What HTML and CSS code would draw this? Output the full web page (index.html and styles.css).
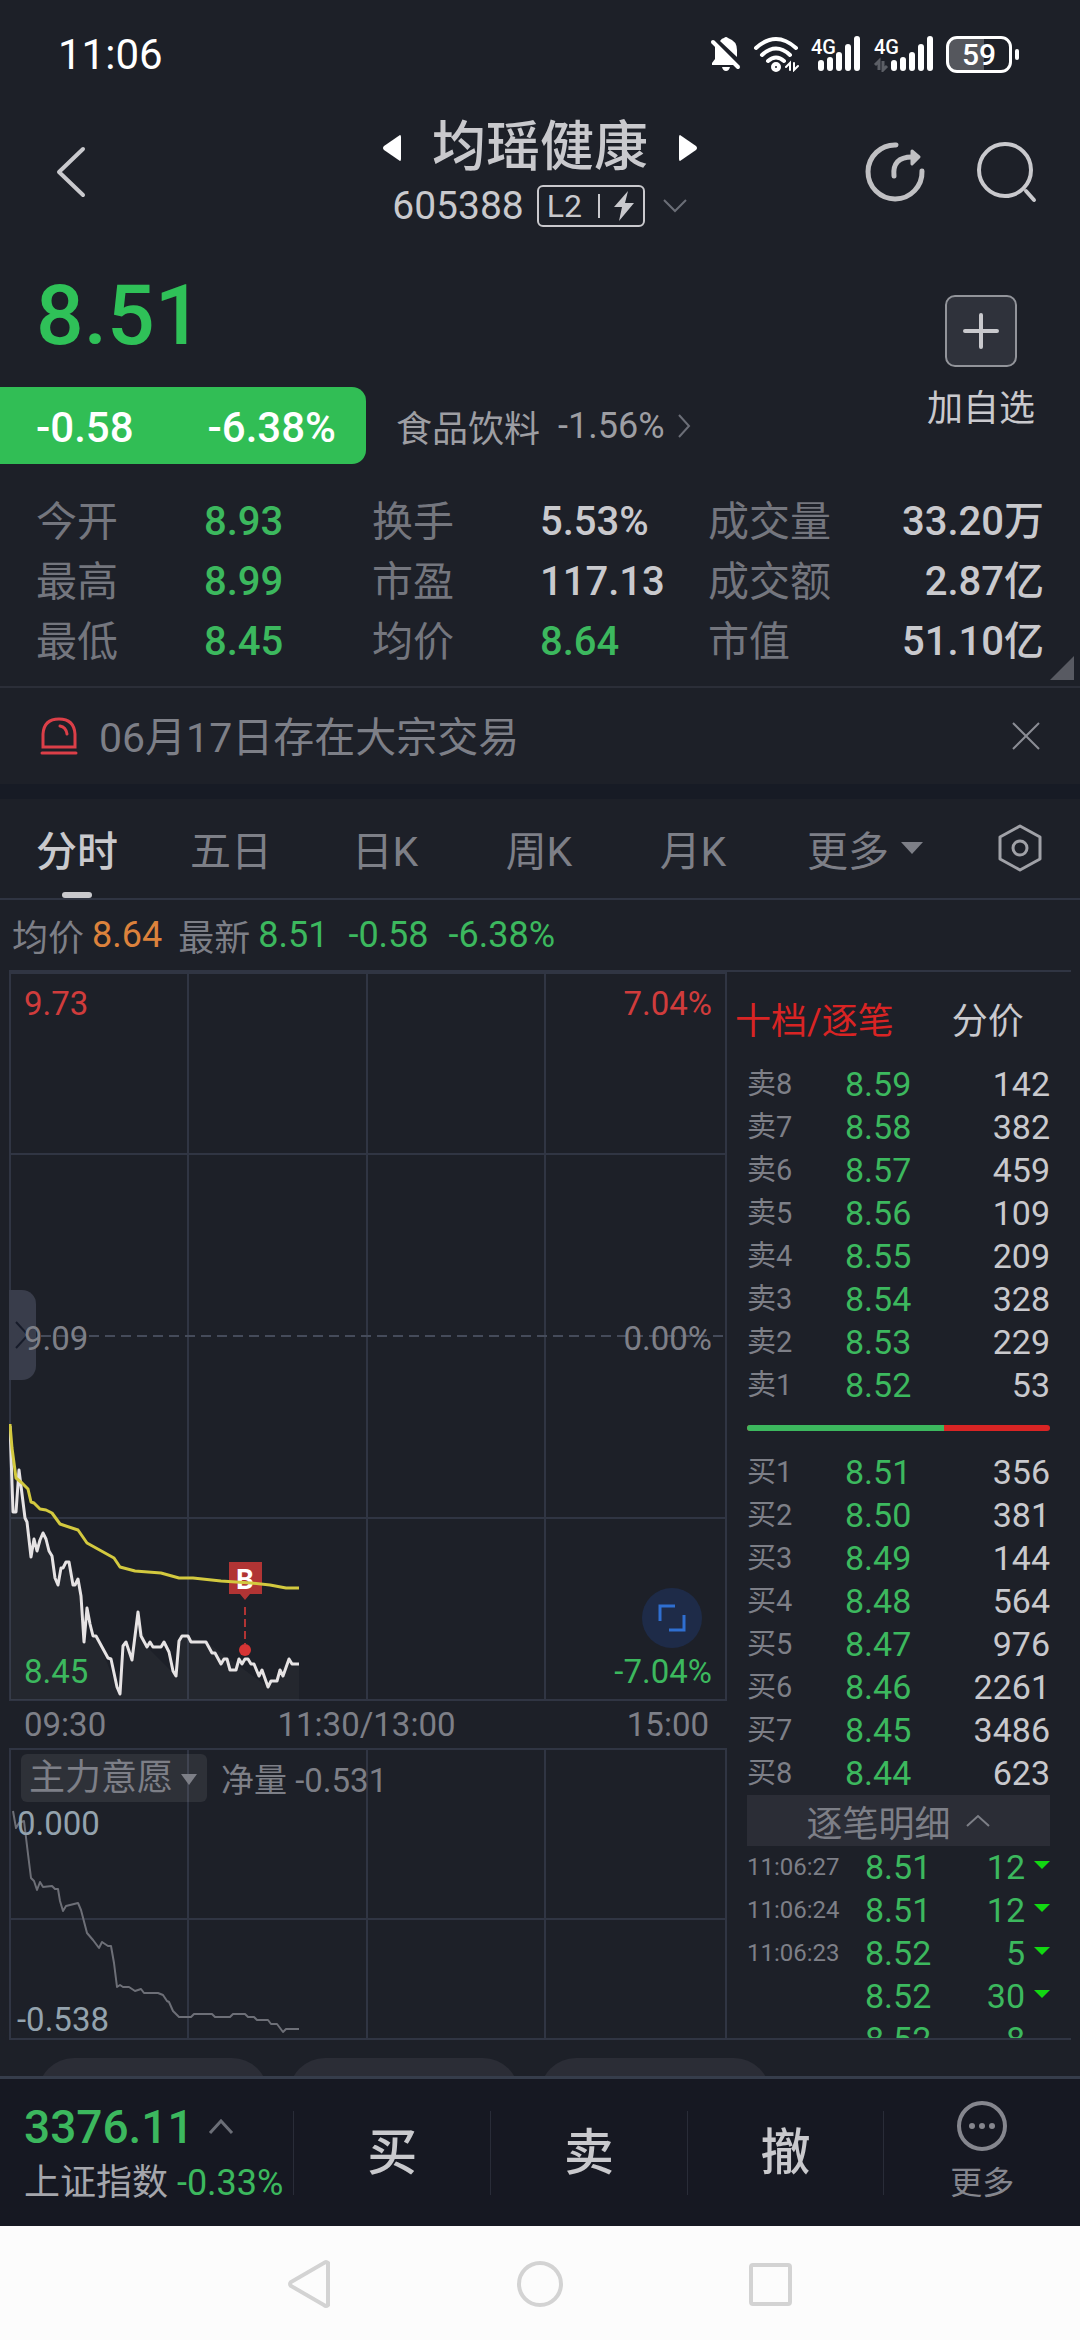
FILE: index.html
```html
<!DOCTYPE html>
<html lang="zh-CN">
<head>
    <meta charset="UTF-8">
    <meta name="viewport" content="width=device-width, initial-scale=1.0">
    <title>均瑶健康 605388</title>
    <link rel="stylesheet" href="styles.css">
</head>
<body>
    <div class="app">
        <div class="status-bar">
            <span class="clock">11:06</span>
            <div class="status-icons">
                <svg width="32" height="36" viewBox="0 0 32 36" fill="#fff">
                    <path d="M5 10L25 29H2V27L5 23Z"/>
                    <path d="M10 5Q12 2 14 2Q16 0 18 2Q27 5 27 14V21Z"/>
                    <path d="M12 31H20Q19 35 16 35Q13 35 12 31Z"/>
                    <path d="M3 6L28 31" stroke="#fff" stroke-width="4" stroke-linecap="round"/>
                </svg>
                <svg width="46" height="36" viewBox="0 0 46 36" fill="none" stroke="#fff" stroke-width="4" stroke-linecap="round">
                    <path d="M3 12Q23 -6 43 12M9 19Q23 6 37 19M15 25Q23 18 31 25"/>
                    <circle cx="23" cy="31" r="3"/>
                    <path d="M37 34V27L33 31M41 27V34L45 30" stroke-width="2"/>
                </svg>
                <svg width="52" height="36" viewBox="0 0 52 36">
                    <text class="net" x="1" y="18">4G</text>
                    <path d="M11 27V32M20 24V32M29 19V32M38 11V32M47 3V32" stroke="#fff" stroke-width="6" stroke-linecap="round"/>
                </svg>
                <svg width="62" height="36" viewBox="0 0 62 36">
                    <text class="net" x="1" y="18">4G</text>
                    <path d="M6 34V25L2 29M10 25V34L14 30" fill="none" stroke="#5c5f66" stroke-width="3"/>
                    <path d="M21 27V32M30 24V32M39 19V32M48 11V32M57 3V32" stroke="#fff" stroke-width="6" stroke-linecap="round"/>
                </svg>
                <span class="battery">59</span>
            </div>
        </div>

        <header class="header">
            <button class="icon-btn back" aria-label="返回">
                <svg width="30" height="52" viewBox="0 0 30 52" fill="none" stroke="#c9c9cd" stroke-width="4" stroke-linecap="round" stroke-linejoin="round"><path d="M27 3L3 26L27 49"/></svg>
            </button>
            <div class="stock">
                <div class="stock-name">
                    <button aria-label="上一只"><svg width="20" height="28" viewBox="0 0 20 28" fill="#fff"><path d="M18 1Q19 1 19 3V25Q19 27 18 27L2 16Q0 14 2 12Z"/></svg></button>
                    <h1>均瑶健康</h1>
                    <button aria-label="下一只"><svg width="20" height="28" viewBox="0 0 20 28" fill="#fff"><path d="M2 1Q1 1 1 3V25Q1 27 2 27L18 16Q20 14 18 12Z"/></svg></button>
                </div>
                <div class="stock-code">
                    <span>605388</span>
                    <span class="level">L2<i></i>
                        <svg width="22" height="30" viewBox="0 0 22 30" fill="#c9c9cd"><path d="M15 0L1 16H9L6 30L21 12H12Z"/></svg>
                    </span>
                    <svg width="26" height="16" viewBox="0 0 26 16" fill="none" stroke="#6b6e77" stroke-width="2"><path d="M2 2L13 13L24 2"/></svg>
                </div>
            </div>
            <div class="header-actions">
                <button class="icon-btn" aria-label="分享">
                    <svg width="62" height="62" viewBox="0 0 62 62" fill="none" stroke="#c0c0c3" stroke-width="5" stroke-linecap="round" stroke-linejoin="round">
                        <path d="M32 4A27 27 0 1 0 58 30"/>
                        <path d="M30 35Q28 16 48 16"/>
                        <path d="M48 10L55 16L48 23Z" fill="#c0c0c3" stroke-width="3"/>
                    </svg>
                </button>
                <button class="icon-btn" aria-label="搜索">
                    <svg width="62" height="62" viewBox="0 0 62 62" fill="none" stroke="#c9c9cd" stroke-width="4" stroke-linecap="round"><circle cx="29" cy="29" r="26"/><path d="M50 50L58 59"/></svg>
                </button>
            </div>
        </header>

        <section class="quote">
            <div class="quote-main">
                <div class="price">8.51</div>
                <div class="change-row">
                    <div class="change"><span>-0.58</span><span>-6.38%</span></div>
                    <a class="industry" href="#">食品饮料 <span>-1.56%</span>
                        <svg width="14" height="26" viewBox="0 0 14 26" fill="none" stroke="#6b6e77" stroke-width="2"><path d="M2 2L12 13L2 24"/></svg>
                    </a>
                </div>
            </div>
            <button class="add">
                <span class="add-icon"><svg width="36" height="36" viewBox="0 0 36 36" stroke="#c9c9cd" stroke-width="4" stroke-linecap="round"><path d="M18 2V34M2 18H34"/></svg></span>
                加自选
            </button>
        </section>

        <dl class="stats">
            <div><dt>今开</dt><dd class="down">8.93</dd></div>
            <div><dt>换手</dt><dd>5.53%</dd></div>
            <div><dt>成交量</dt><dd>33.20万</dd></div>
            <div><dt>最高</dt><dd class="down">8.99</dd></div>
            <div><dt>市盈</dt><dd>117.13</dd></div>
            <div><dt>成交额</dt><dd>2.87亿</dd></div>
            <div><dt>最低</dt><dd class="down">8.45</dd></div>
            <div><dt>均价</dt><dd class="down">8.64</dd></div>
            <div><dt>市值</dt><dd>51.10亿</dd></div>
        </dl>

        <div class="notice">
            <svg width="40" height="40" viewBox="0 0 40 40" fill="none" stroke="#dc3f48" stroke-width="3" stroke-linecap="round">
                <path d="M4 31V18Q5 3 20 3Q35 3 36 18V31Z"/><path d="M21 10Q27 11 28 18"/><path d="M3 37H37"/>
            </svg>
            <span>06月17日存在大宗交易</span>
            <button class="icon-btn" aria-label="关闭">
                <svg width="30" height="30" viewBox="0 0 30 30" stroke="#8a8c94" stroke-width="2"><path d="M2 2L28 28M28 2L2 28"/></svg>
            </button>
        </div>

        <nav class="tabs">
            <button class="active">分时</button>
            <button>五日</button>
            <button>日K</button>
            <button>周K</button>
            <button>月K</button>
            <button>更多<i class="caret"></i></button>
            <button aria-label="设置">
                <svg width="46" height="50" viewBox="0 0 46 50" fill="none" stroke="#a0a1a7" stroke-width="3" stroke-linejoin="round"><path d="M23 3L43 14V36L23 47L3 36V14Z"/><circle cx="23" cy="25" r="7"/></svg>
            </button>
        </nav>

        <div class="summary">
            <span>均价</span><b class="avg">8.64</b>
            <span class="latest">最新</span><b>8.51</b><b class="gap">-0.58</b><b class="gap">-6.38%</b>
        </div>

        <main class="board">
            <div class="charts">
                <div class="chart">
                    <svg class="plot" viewBox="0 0 718 729">
                        <g fill="none" stroke="#303543" stroke-width="2">
                            <path d="M1 1H717V728H1ZM179 0V728M358 0V728M536 0V728M0 182H718M0 546H718"/>
                            <path d="M0 364H718" stroke="#454b5a" stroke-dasharray="10 6"/>
                        </g>
                        <path d="M1 454L4 540H7L10 498L22 585L34 561L49 613L60 590L69 607L75 670L87 664L111 722L117 670L123 688L129 640L138 675L167 704L173 664L197 670L259 715L280 687L290 692V728H1Z" fill="#fff" fill-opacity=".03"/>
                        <polyline fill="none" stroke="#e6e3e4" stroke-width="3" stroke-linejoin="round" points="1,454 4,540 7,540 10,498 16,546 18,550 22,585 25,567 28,579 31,568 34,561 37,567 40,579 43,584 46,606 49,613 52,596 54,596 57,590 60,590 64,613 66,613 69,607 72,624 75,670 78,636 81,652 84,664 87,664 99,686 102,687 108,715 111,722 114,674 117,670 123,688 129,640 132,664 138,675 141,670 144,675 152,675 155,670 160,680 164,699 167,704 170,669 173,664 179,664 182,670 197,670 203,681 206,681 212,692 215,687 218,687 221,698 227,698 230,687 233,692 236,687 239,687 242,692 245,692 250,704 253,698 259,715 262,709 268,709 271,698 274,704 280,687 283,692 290,692"/>
                        <path d="M220 590H253V622H241L236 628L231 622H220Z" fill="#b13434"/>
                        <text class="mark" x="236" y="617" text-anchor="middle">B</text>
                        <path d="M236 635V672" stroke="#b13434" stroke-width="2" stroke-dasharray="8 4"/>
                        <circle cx="236" cy="678" r="6" fill="#d63434"/>
                        <polyline fill="none" stroke="#d3c93f" stroke-width="3" stroke-linejoin="round" points="1,452 3,476 7,506 13,511 19,517 22,530 25,531 31,537 37,538 43,541 51,552 69,558 78,571 87,576 105,586 111,595 126,599 152,601 170,606 184,606 212,609 242,611 261,613 277,616 290,616"/>
                    </svg>
                    <button class="drawer" aria-label="展开">
                        <svg width="16" height="30" viewBox="0 0 16 30" fill="none" stroke="#171c2a" stroke-width="2"><path d="M2 2L14 15L2 28"/></svg>
                    </button>
                    <span class="label top left up">9.73</span>
                    <span class="label top right up">7.04%</span>
                    <span class="label middle left">9.09</span>
                    <span class="label middle right">0.00%</span>
                    <span class="label bottom left down">8.45</span>
                    <span class="label bottom right down">-7.04%</span>
                    <button class="expand" aria-label="全屏">
                        <svg width="30" height="30" viewBox="0 0 30 30" fill="none" stroke="#2f6fd0" stroke-width="3"><path d="M3 18V3H18M27 12V27H12"/></svg>
                    </button>
                </div>
                <div class="times"><span>09:30</span><span>11:30/13:00</span><span>15:00</span></div>
                <div class="chart">
                    <svg class="plot" viewBox="0 0 718 290">
                        <path d="M1 290V1H717V290M179 0V290M358 0V290M536 0V290M0 171H718" fill="none" stroke="#303543" stroke-width="2"/>
                        <polyline fill="none" stroke="#6d6f77" stroke-width="2" stroke-linejoin="round" points="4,63 7,80 10,75 15,73 19,106 22,130 25,133 28,142 31,134 34,139 43,138 46,141 49,141 51,153 54,163 57,158 69,155 72,162 78,185 84,192 90,200 93,194 99,198 102,198 105,215 108,239 111,237 114,239 120,239 126,243 132,241 135,245 149,245 154,247 158,253 160,254 164,263 170,269 182,269 185,266 203,266 206,269 221,269 224,266 236,266 239,269 245,269 248,272 259,272 262,276 268,276 274,284 277,281 290,281"/>
                    </svg>
                    <div class="indicator"><button>主力意愿<i class="caret"></i></button><span>净量 -0.531</span></div>
                    <span class="label scale high">0.000</span>
                    <span class="label scale low">-0.538</span>
                </div>
            </div>

            <aside class="depth">
                <div class="depth-tabs"><button class="active">十档/逐笔</button><button>分价</button></div>
                <table class="orders">
                    <tr><th>卖8</th><td>8.59</td><td>142</td></tr>
                    <tr><th>卖7</th><td>8.58</td><td>382</td></tr>
                    <tr><th>卖6</th><td>8.57</td><td>459</td></tr>
                    <tr><th>卖5</th><td>8.56</td><td>109</td></tr>
                    <tr><th>卖4</th><td>8.55</td><td>209</td></tr>
                    <tr><th>卖3</th><td>8.54</td><td>328</td></tr>
                    <tr><th>卖2</th><td>8.53</td><td>229</td></tr>
                    <tr><th>卖1</th><td>8.52</td><td>53</td></tr>
                </table>
                <div class="ratio"><div style="width: 65%"></div></div>
                <table class="orders">
                    <tr><th>买1</th><td>8.51</td><td>356</td></tr>
                    <tr><th>买2</th><td>8.50</td><td>381</td></tr>
                    <tr><th>买3</th><td>8.49</td><td>144</td></tr>
                    <tr><th>买4</th><td>8.48</td><td>564</td></tr>
                    <tr><th>买5</th><td>8.47</td><td>976</td></tr>
                    <tr><th>买6</th><td>8.46</td><td>2261</td></tr>
                    <tr><th>买7</th><td>8.45</td><td>3486</td></tr>
                    <tr><th>买8</th><td>8.44</td><td>623</td></tr>
                </table>
                <button class="detail">逐笔明细
                    <svg width="26" height="14" viewBox="0 0 26 14" fill="none" stroke="#7d7f87" stroke-width="2"><path d="M2 12L13 2L24 12"/></svg>
                </button>
                <div class="ticks-clip">
                    <table class="ticks">
                        <tr><th>11:06:27</th><td>8.51</td><td>12</td><td><i class="caret"></i></td></tr>
                        <tr><th>11:06:24</th><td>8.51</td><td>12</td><td><i class="caret"></i></td></tr>
                        <tr><th>11:06:23</th><td>8.52</td><td>5</td><td><i class="caret"></i></td></tr>
                        <tr><th></th><td>8.52</td><td>30</td><td><i class="caret"></i></td></tr>
                        <tr><th></th><td>8.52</td><td>8</td><td></td></tr>
                    </table>
                </div>
            </aside>
        </main>

        <div class="chips"><span></span><span></span><span></span></div>

        <footer class="trade-bar">
            <div class="index">
                <div class="index-value">3376.11
                    <svg width="26" height="16" viewBox="0 0 26 16" fill="none" stroke="#6b6e77" stroke-width="3"><path d="M2 14L13 2L24 14"/></svg>
                </div>
                <div class="index-name">上证指数 <span>-0.33%</span></div>
            </div>
            <button>买</button>
            <button>卖</button>
            <button>撤</button>
            <button class="more">
                <svg width="52" height="52" viewBox="0 0 52 52" fill="none" stroke="#85868e" stroke-width="4"><circle cx="26" cy="26" r="23"/><g fill="#85868e" stroke="none"><circle cx="16" cy="26" r="3"/><circle cx="26" cy="26" r="3"/><circle cx="36" cy="26" r="3"/></g></svg>
                更多
            </button>
        </footer>

        <div class="system-nav">
            <svg width="50" height="50" viewBox="0 0 50 50"><path d="M43 4V46Q41 48 39 46L6 27Q4 25 6 23L39 4Q41 2 43 4Z"/></svg>
            <svg width="50" height="50" viewBox="0 0 50 50"><circle cx="25" cy="25" r="21"/></svg>
            <svg width="50" height="50" viewBox="0 0 50 50"><rect x="6" y="6" width="39" height="39" rx="2"/></svg>
        </div>
    </div>
</body>
</html>
```
FILE: styles.css
```css
:root {
    --bg: #1d2028;
    --dark: #161822;
    --line: #303543;
    --text: #c9c9cd;
    --muted: #7d7f87;
    --green: #3cb85e;
    --red: #d92424;
}

* {
    box-sizing: border-box;
    margin: 0;
    padding: 0;
}

body {
    font-family: Roboto, "Noto Sans CJK SC", sans-serif;
    font-size: 36px;
    color: var(--text);
    background: var(--bg);
}

button {
    font: inherit;
    color: inherit;
    background: none;
    border: none;
    cursor: pointer;
}

svg {
    display: block;
    flex-shrink: 0;
}

a {
    color: inherit;
    text-decoration: none;
}

.app {
    display: flex;
    flex-direction: column;
    min-height: 100vh;
}

.caret {
    display: inline-block;
    border: 11px solid transparent;
    border-top: 12px solid currentColor;
    border-bottom: 0;
}

.down {
    color: var(--green);
}

.up {
    color: #d03c3c;
}

/* Status bar */
.status-bar {
    display: flex;
    justify-content: space-between;
    align-items: center;
    height: 108px;
    padding: 0 68px 0 58px;
    color: #fff;
}

.clock {
    font-size: 42px;
}

.status-icons {
    display: flex;
    align-items: center;
    gap: 11px;
}

.net {
    font-size: 20px;
    font-weight: 500;
    fill: #fff;
}

.battery {
    position: relative;
    width: 66px;
    height: 37px;
    border: 3px solid #fff;
    border-radius: 11px;
    background: linear-gradient(90deg, #55575d 59%, transparent 59%);
    font-size: 30px;
    font-weight: 500;
    line-height: 32px;
    text-align: center;
}

.battery::after {
    content: "";
    position: absolute;
    right: -10px;
    top: 10px;
    width: 4px;
    height: 11px;
    border-radius: 2px;
    background: #fff;
}

/* Header */
.header {
    display: grid;
    grid-template-columns: 1fr auto 1fr;
    align-items: center;
    height: 128px;
    padding: 0 42px;
}

.icon-btn {
    display: flex;
}

.back {
    margin-left: 14px;
}

.stock {
    padding-top: 4px;
}

.stock-name {
    display: flex;
    justify-content: center;
    align-items: center;
    gap: 30px;
}

.stock-name h1 {
    font-size: 54px;
    font-weight: 500;
    line-height: 64px;
}

.stock-code {
    display: flex;
    justify-content: center;
    align-items: center;
    gap: 13px;
    font-size: 39px;
    line-height: 52px;
}

.stock-code > svg {
    margin-left: 4px;
}

.level {
    display: flex;
    align-items: center;
    justify-content: space-between;
    width: 108px;
    height: 42px;
    padding: 0 8px;
    border: 2px solid var(--text);
    border-radius: 6px;
    font-size: 32px;
}

.level i {
    width: 2px;
    height: 24px;
    margin-left: 4px;
    background: var(--text);
}

.header-actions {
    display: flex;
    justify-content: flex-end;
    gap: 50px;
}

/* Quote */
.quote {
    display: flex;
    justify-content: space-between;
    padding: 24px 45px 0 0;
}

.price {
    padding-left: 36px;
    font-size: 84px;
    font-weight: 500;
    line-height: 112px;
    color: #2fc158;
}

.change-row {
    display: flex;
    align-items: center;
    margin-top: 15px;
}

.change {
    display: flex;
    justify-content: space-between;
    align-items: center;
    width: 366px;
    height: 77px;
    padding: 4px 30px 0 36px;
    border-radius: 0 14px 14px 0;
    background: #31be55;
    color: #fff;
    font-size: 42px;
    font-weight: 500;
}

.industry {
    display: flex;
    align-items: center;
    gap: 12px;
    margin-left: 30px;
    color: #9d9ea3;
}

.industry span {
    padding-left: 6px;
}

.add {
    display: flex;
    flex-direction: column;
    align-items: center;
    gap: 16px;
    padding-top: 35px;
    line-height: 52px;
}

.add-icon {
    display: flex;
    align-items: center;
    justify-content: center;
    width: 72px;
    height: 72px;
    border: 2px solid #92949a;
    border-radius: 10px;
    background: #2f323b;
}

.stats {
    position: relative;
    display: grid;
    grid-template-columns: repeat(3, 1fr);
    margin-top: 28px;
    padding: 0 36px 14px;
    border-bottom: 2px solid #2b2e38;
    font-size: 41px;
    line-height: 60px;
}

.stats::after {
    content: "";
    position: absolute;
    right: 6px;
    bottom: 6px;
    border: 12px solid #585a62;
    border-top-color: transparent;
    border-left-color: transparent;
}

.stats div {
    display: flex;
}

.stats dt {
    width: 50%;
    color: #74767e;
}

.stats dd {
    font-size: 40px;
    font-weight: 500;
}

.stats div:nth-child(3n) dd {
    margin-left: auto;
    white-space: nowrap;
}

.notice {
    display: flex;
    align-items: center;
    gap: 20px;
    height: 96px;
    padding: 0 39px;
    color: var(--muted);
    font-size: 41px;
}

.notice span {
    padding-bottom: 4px;
}

.notice .icon-btn {
    margin-left: auto;
}

/* Period tabs */
.tabs {
    display: grid;
    grid-template-columns: repeat(5, 154fr) 190fr 120fr;
    height: 116px;
    border-top: 15px solid #171b25;
    border-bottom: 2px solid #2f3442;
    color: var(--muted);
    font-size: 41px;
}

.tabs button {
    position: relative;
    display: flex;
    align-items: center;
    justify-content: center;
    padding-bottom: 2px;
}

.tabs .caret {
    margin-left: 12px;
}

.tabs .active {
    color: var(--text);
    font-weight: 500;
}

.tabs .active::after {
    content: "";
    position: absolute;
    left: 50%;
    bottom: 0;
    width: 30px;
    height: 6px;
    margin-left: -15px;
    border-radius: 3px;
    background: var(--text);
}

.summary {
    display: flex;
    align-items: center;
    height: 70px;
    padding: 0 12px;
    color: var(--muted);
}

.summary b {
    margin-left: 8px;
    font-weight: 400;
    color: var(--green);
}

.summary .avg {
    color: #dc823c;
}

.summary .latest {
    margin-left: 16px;
}

.summary .gap {
    margin-left: 20px;
}

/* Charts and order book */
.board {
    display: grid;
    grid-template-columns: minmax(0, 718fr) minmax(0, 344fr);
    margin: 0 9px;
    border-top: 2px solid var(--line);
    border-bottom: 2px solid var(--line);
}

.charts {
    color: var(--muted);
    font-size: 33px;
}

.chart {
    position: relative;
}

.plot {
    width: 100%;
    height: auto;
}

.mark {
    font-size: 28px;
    font-weight: 700;
    fill: #fff;
}

.label {
    position: absolute;
    line-height: 40px;
}

.left {
    left: 15px;
}

.right {
    right: 15px;
}

.top {
    top: 12px;
}

.middle {
    top: 347px;
}

.bottom {
    bottom: 9px;
}

.drawer {
    position: absolute;
    left: 0;
    top: 318px;
    width: 27px;
    height: 90px;
    padding-left: 5px;
    border-radius: 0 14px 14px 0;
    background: #393d4b;
}

.expand {
    position: absolute;
    right: 25px;
    bottom: 53px;
    display: flex;
    align-items: center;
    justify-content: center;
    width: 60px;
    height: 60px;
    border-radius: 50%;
    background: #1e2b48;
}

.times {
    display: flex;
    justify-content: space-between;
    padding: 0 18px 0 15px;
    line-height: 47px;
}

.indicator {
    position: absolute;
    left: 12px;
    top: 6px;
    display: flex;
    align-items: center;
    gap: 14px;
}

.indicator button {
    height: 48px;
    padding: 0 10px 0 8px;
    border-radius: 6px;
    background: rgba(255, 255, 255, 0.08);
    font-size: 36px;
    line-height: 46px;
}

.indicator .caret {
    margin: 0 0 5px 8px;
    border-width: 11px 8px 0;
}

.scale {
    left: 8px;
    color: #94a3ae;
}

.high {
    top: 56px;
}

.low {
    bottom: -2px;
}

.depth {
    display: flex;
    flex-direction: column;
    padding: 0 21px 0 8px;
}

.depth-tabs {
    display: flex;
    align-items: center;
    gap: 58px;
    height: 91px;
    white-space: nowrap;
}

.depth-tabs .active {
    color: var(--red);
}

.depth table {
    width: 100%;
    border-collapse: collapse;
    line-height: 43px;
}

.orders,
.ticks {
    font-size: 34px;
}

.orders th {
    width: 98px;
    font-size: 29px;
    font-weight: 400;
    text-align: left;
    color: var(--muted);
}

.orders td,
.ticks td {
    height: 43px;
    color: var(--green);
}

.orders td:last-child {
    text-align: right;
    color: var(--text);
}

.orders,
.ratio,
.detail,
.ticks-clip {
    margin-left: 12px;
}

.depth .orders {
    width: calc(100% - 12px);
}

.ratio {
    height: 6px;
    margin: 18px 0 20px 12px;
    border-radius: 3px;
    overflow: hidden;
    background: var(--red);
}

.ratio div {
    height: 100%;
    background: var(--green);
}

.detail {
    display: flex;
    align-items: center;
    justify-content: center;
    gap: 14px;
    height: 51px;
    background: #2b2d36;
    color: var(--muted);
}

.ticks-clip {
    flex: 1 1 0;
    min-height: 0;
    overflow: hidden;
}

.ticks th {
    width: 118px;
    font-size: 24px;
    font-weight: 400;
    text-align: left;
    color: var(--muted);
}

.ticks td:nth-child(3) {
    text-align: right;
}

.ticks td:last-child {
    width: 25px;
    line-height: 0;
    text-align: right;
}

.ticks .caret {
    margin-bottom: 6px;
    border-width: 8px 8px 0;
    color: #12d812;
}

.chips {
    display: flex;
    gap: 21px;
    height: 36px;
    padding: 18px 38px 0;
    overflow: hidden;
}

.chips span {
    width: 230px;
    height: 72px;
    border-radius: 36px;
    background: #2b2d36;
}

/* Trade bar */
.trade-bar {
    display: grid;
    grid-template-columns: 294fr repeat(4, 197fr);
    align-items: center;
    height: 150px;
    border-top: 3px solid #363d4b;
    background: var(--dark);
}

.index {
    padding-left: 24px;
    white-space: nowrap;
}

.index-value {
    display: flex;
    align-items: center;
    gap: 14px;
    font-size: 46px;
    font-weight: 500;
    line-height: 60px;
    color: var(--green);
}

.index-name {
    line-height: 52px;
    color: #a5a6ac;
}

.index-name span {
    color: var(--green);
}

.trade-bar button {
    height: 84px;
    border-left: 1px solid #292c38;
    font-size: 50px;
    font-weight: 500;
    line-height: 84px;
}

.trade-bar .more {
    display: flex;
    flex-direction: column;
    align-items: center;
    justify-content: center;
    gap: 8px;
    color: #85868e;
    font-size: 32px;
    font-weight: 400;
    line-height: 46px;
}

.system-nav {
    display: flex;
    flex: 1;
    justify-content: center;
    align-items: center;
    gap: 180px;
    min-height: 116px;
    background: #fcfcfc;
}

.system-nav svg {
    fill: none;
    stroke: #d3d3d3;
    stroke-width: 4;
}
```
